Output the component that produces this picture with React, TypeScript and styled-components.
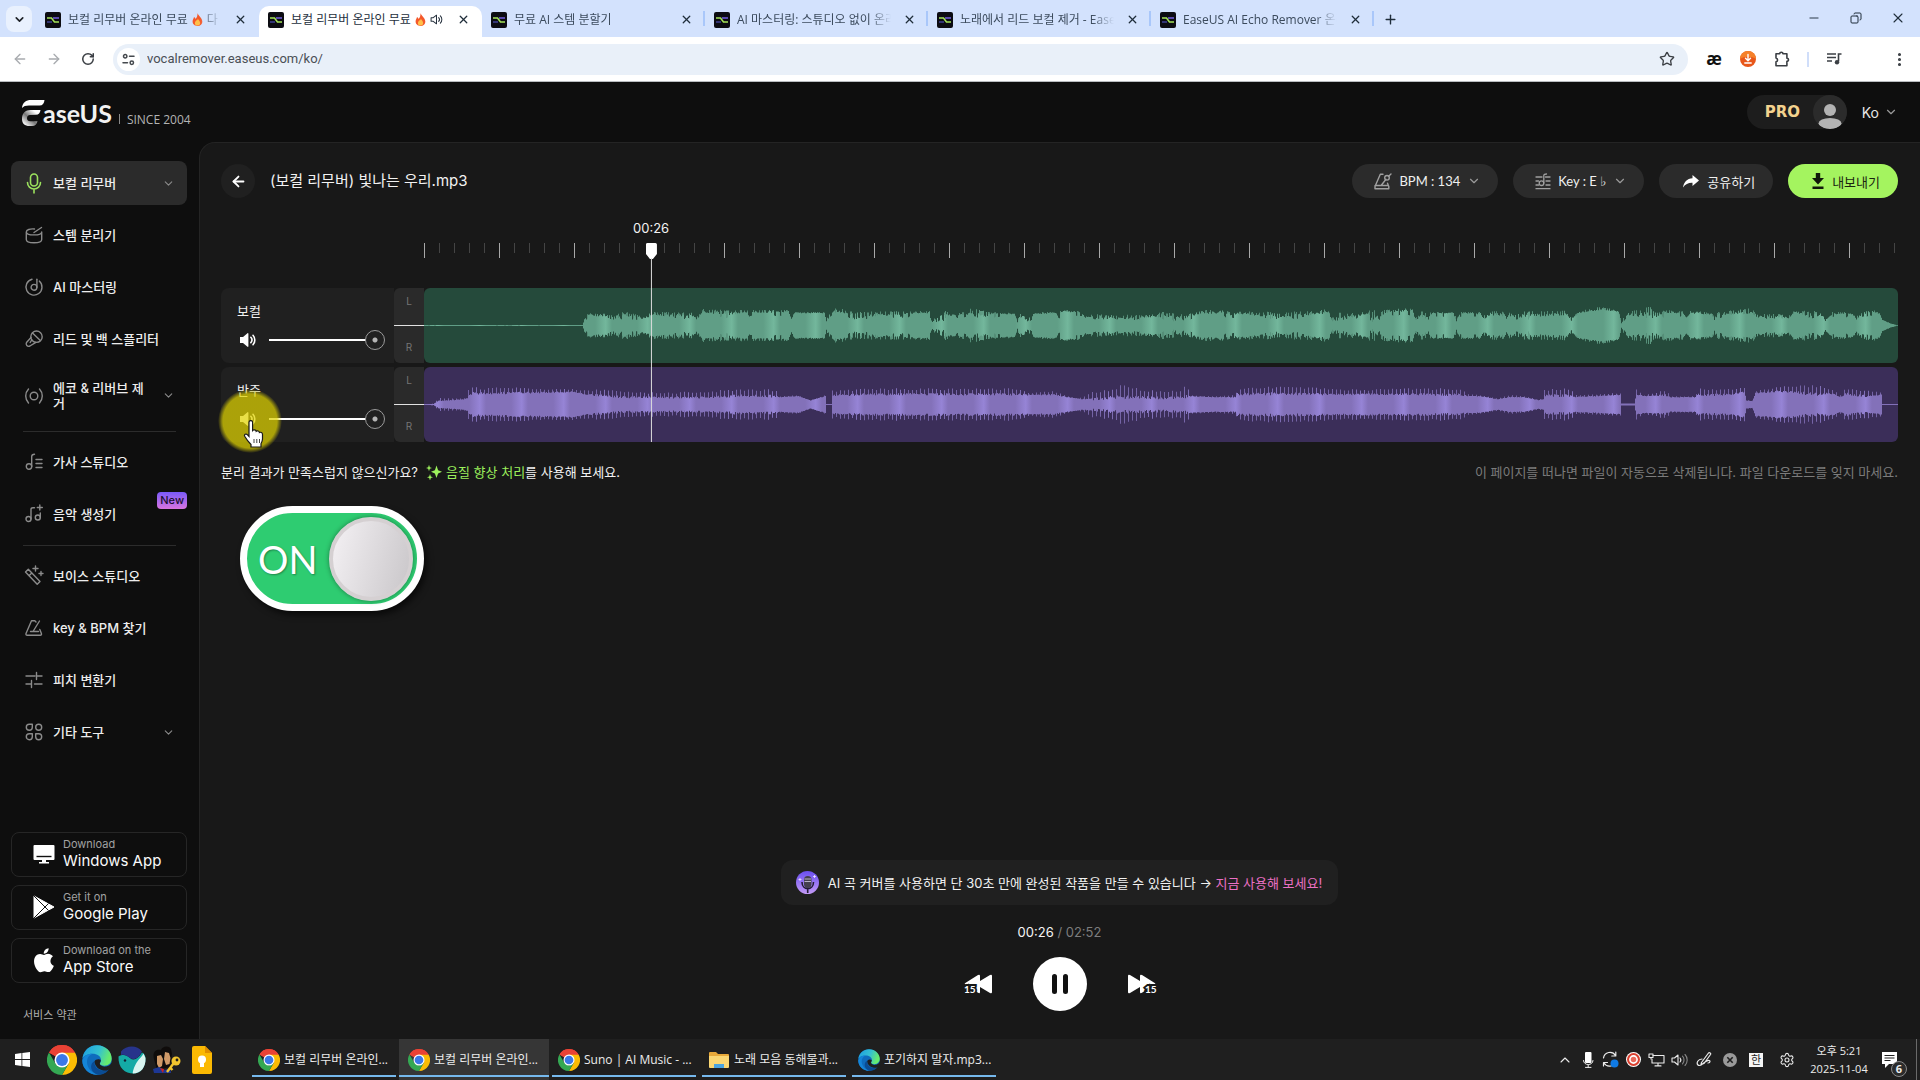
import React, { useId, useState } from "react";
import styled, { createGlobalStyle, css } from "styled-components";
import {
  ArrowLeft,
  ArrowRight,
  ChevronDown,
  ChevronUp,
  Copy,
  EllipsisVertical,
  Minus,
  Plus,
  RotateCw,
  Settings,
  Star,
  X,
} from "lucide-react";

const PAGE_FONT = `"Inter", "Noto Sans CJK KR", sans-serif`;
const SYSTEM_FONT = `"Open Sans", "Noto Sans CJK KR", sans-serif`;

const GlobalStyle = createGlobalStyle`
  *, *::before, *::after { box-sizing: border-box; }
  body { margin: 0; background: #0e0e0e; color: #f2f2f2; font-family: ${PAGE_FONT}; }
  button, input { font: inherit; color: inherit; }
  button { border: 0; padding: 0; background: none; cursor: pointer; }
  a { color: inherit; text-decoration: none; }
  svg { display: block; flex: none; }
`;

const Screen = styled.div`
  display: flex;
  flex-direction: column;
  min-height: 100vh;
`;

/* ---------- browser chrome ---------- */

const TabStrip = styled.div`
  display: flex;
  align-items: flex-start;
  height: 37px;
  padding: 6px 10px 0 6px;
  background: #d3e2fd;
  color: #3b4a5c;
  font: 12px/16px ${SYSTEM_FONT};
`;

const TabSearch = styled.button`
  display: grid;
  place-items: center;
  width: 26px;
  height: 26px;
  margin-right: 4px;
  border-radius: 8px;
  background: #e9f1fe;
  color: #1f2328;
`;

const Tab = styled.div<{ $active?: boolean; $divided?: boolean }>`
  position: relative;
  display: flex;
  align-items: center;
  width: 223px;
  height: 31px;
  padding: 0 11px 4px 9px;
  border-radius: 10px 10px 0 0;
  ${(p) => p.$active && css`background: #fff; color: #25303d;`}
  ${(p) =>
    p.$divided &&
    css`
      &::after {
        content: "";
        position: absolute;
        right: 0;
        top: 5px;
        width: 2px;
        height: 15px;
        background: #a9c7fa;
      }
    `}
`;

const TabTitle = styled.span<{ $whole?: boolean }>`
  display: flex;
  flex: 1;
  align-items: center;
  gap: 4px;
  min-width: 0;
  margin: 0 10px 0 7px;
  overflow: hidden;
  white-space: nowrap;
  ${(p) => !p.$whole && css`mask-image: linear-gradient(90deg, #000 calc(100% - 22px), transparent);`}
`;

const TabClose = styled.button`
  display: grid;
  place-items: center;
  width: 16px;
  height: 16px;
  color: #1f2d3a;
`;

const NewTab = styled.button`
  display: grid;
  place-items: center;
  width: 26px;
  height: 26px;
  margin-left: 3px;
  color: #1f2d3a;
`;

const WindowButtons = styled.div`
  display: flex;
  gap: 26px;
  margin: 4px 4px 0 auto;
  color: #1f2d3a;
`;

const WindowButton = styled.button`
  display: grid;
  place-items: center;
  width: 16px;
  height: 16px;
`;

const AddressRow = styled.div`
  display: flex;
  align-items: center;
  height: 45px;
  padding: 0 12px 0 11px;
  border-bottom: 1px solid #b9bcc0;
  background: #fff;
  color: #44484d;
`;

const NavButton = styled.button<{ $dim?: boolean }>`
  display: grid;
  place-items: center;
  width: 18px;
  height: 18px;
  margin-right: 16px;
  color: ${(p) => (p.$dim ? "#a8abaf" : "#3b3f44")};
`;

const Omnibox = styled.div`
  display: flex;
  flex: 1;
  align-items: center;
  height: 31px;
  padding: 0 12px 0 4px;
  border-radius: 16px;
  background: #e9f0f9;
`;

const SiteInfo = styled.button`
  display: grid;
  place-items: center;
  width: 23px;
  height: 23px;
  border-radius: 50%;
  background: #fff;
`;

const UrlInput = styled.input`
  flex: 1;
  min-width: 0;
  border: 0;
  padding: 0 7px;
  outline: 0;
  background: none;
  color: #4a4f56;
  font: 13px/20px "Roboto", "Noto Sans CJK KR", sans-serif;
`;

const Extensions = styled.div`
  display: flex;
  align-items: center;
  gap: 16px;
  padding-left: 17px;
`;

const ExtensionButton = styled.button`
  display: grid;
  place-items: center;
  width: 18px;
  height: 18px;
  color: #3b3f44;
`;

const MenuButton = styled(ExtensionButton)`
  margin-left: 31px;
`;

const Ligature = styled.span`
  color: #111;
  font: 700 17px/18px "Open Sans", sans-serif;
`;

const ExtensionDivider = styled.span`
  width: 2px;
  height: 15px;
  background: #d0defa;
`;

/* ---------- site header ---------- */

const SiteHeader = styled.header`
  display: flex;
  align-items: center;
  justify-content: space-between;
  height: 60px;
  padding: 0 22px;
`;

const Brand = styled.a`
  display: flex;
  align-items: flex-end;
  height: 30px;
`;

const BrandName = styled.span`
  margin-left: -3px;
  font: 700 25px/28px "Lato", sans-serif;
`;

const BrandSince = styled.span`
  margin-left: 7px;
  color: #b4b4b4;
  font: 12px/15px "Open Sans", sans-serif;
  &::before {
    content: "";
    display: inline-block;
    width: 1px;
    height: 10px;
    margin-right: 7px;
    background: #8a8a8a;
  }
`;

const HeaderActions = styled.div`
  display: flex;
  align-items: center;
  gap: 15px;
`;

const ProPill = styled.button`
  display: flex;
  align-items: center;
  justify-content: space-between;
  width: 100px;
  height: 34px;
  padding-left: 18px;
  border-radius: 17px;
  background: #1d1d1d;
  color: #f3d28e;
  font: 700 15px/18px "DejaVu Sans", sans-serif;
`;

const LanguageButton = styled.button`
  display: flex;
  align-items: center;
  gap: 5px;
  color: #e6e6e6;
  font-size: 14px;
`;

/* ---------- sidebar ---------- */

const Body = styled.div`
  display: flex;
  flex: 1;
`;

const Sidebar = styled.aside`
  display: flex;
  flex-direction: column;
  width: 199px;
  padding: 19px 12px 12px 11px;
`;

const NavGroup = styled.nav`
  display: flex;
  flex-direction: column;
  gap: 8px;
  & + & {
    margin-top: 9px;
    padding-top: 9px;
    position: relative;
  }
  & + &::before {
    content: "";
    position: absolute;
    top: 0;
    left: 12px;
    right: 11px;
    height: 1px;
    background: #2c2c2c;
  }
`;

const NavLink = styled.a<{ $active?: boolean; $tall?: boolean }>`
  position: relative;
  display: flex;
  align-items: center;
  gap: 10px;
  height: ${(p) => (p.$tall ? 53 : 44)}px;
  padding: 0 12px 0 14px;
  border-radius: 8px;
  background: ${(p) => (p.$active ? "#2b2b2b" : "none")};
  color: #ededed;
  font-size: 13px;
  font-weight: 500;
  line-height: 15px;
  & > svg { color: #8b8b8b; }
  & > svg:first-child { color: ${(p) => (p.$active ? "#9be15d" : "#8b8b8b")}; }
`;

const NavLabel = styled.span`
  flex: 1;
`;

const NewBadge = styled.span`
  position: absolute;
  top: 0;
  right: 0;
  padding: 0 3px;
  border-radius: 4px;
  background: linear-gradient(180deg, #7a5af8, #d874e0);
  color: #1c1030;
  font-size: 11px;
  line-height: 17px;
`;

const Downloads = styled.div`
  display: flex;
  flex-direction: column;
  gap: 8px;
  margin-top: auto;
`;

const DownloadLink = styled.a`
  display: grid;
  grid-template-columns: 24px 1fr;
  align-items: center;
  column-gap: 7px;
  height: 45px;
  padding: 0 0 2px 20px;
  border: 1px solid #262626;
  border-radius: 8px;
  & > svg { justify-self: center; }
`;

const DownloadText = styled.span`
  display: flex;
  flex-direction: column;
  color: #fafafa;
  font-size: 15px;
  line-height: 18px;
`;

const DownloadCaption = styled.small`
  color: #a2a2a2;
  font-size: 11px;
  line-height: 15px;
`;

const TermsLink = styled.a`
  margin: 20px 0 0 12px;
  color: #b0b0b0;
  font-size: 11px;
  line-height: 24px;
`;

/* ---------- main panel ---------- */

const Panel = styled.main`
  display: flex;
  flex: 1;
  flex-direction: column;
  min-width: 0;
  padding: 21px 22px 28px 21px;
  border: solid #242424;
  border-width: 1px 0 0 1px;
  border-radius: 16px 0 0 0;
  background: #181818;
`;

const TitleRow = styled.div`
  display: flex;
  align-items: center;
  gap: 15px;
`;

const BackButton = styled.button`
  display: grid;
  place-items: center;
  width: 34px;
  height: 34px;
  border-radius: 50%;
  background: #202020;
  color: #fff;
`;

const TrackTitle = styled.h1`
  flex: 1;
  margin: 0;
  font-size: 15px;
  font-weight: 400;
  line-height: 22px;
`;

const Pill = styled.button<{ $accent?: boolean; $chooser?: boolean }>`
  display: flex;
  align-items: center;
  justify-content: center;
  gap: 8px;
  height: 34px;
  padding: 0 18px 0 24px;
  border-radius: 17px;
  background: ${(p) => (p.$accent ? "#a4f45f" : "#2b2b2b")};
  color: ${(p) => (p.$accent ? "#1a2410" : "#f0f0f0")};
  font-size: 13px;
  white-space: nowrap;
  ${(p) =>
    p.$chooser &&
    css`
      gap: 7px;
      padding: 0 17px 0 22px;
      font: 13px/20px "Lato", "DejaVu Sans", sans-serif;
    `}
`;

const Timeline = styled.section`
  position: relative;
  margin-top: 22px;
`;

const Ruler = styled.div`
  height: 39px;
  margin: 0 0 5px 203px;
  padding-top: 23px;
  &::before {
    content: "";
    display: block;
    height: 15px;
    background:
      repeating-linear-gradient(90deg, #a8a8a8 0 1px, transparent 1px 75px),
      repeating-linear-gradient(90deg, #444 0 1px, transparent 1px 15px) 0 0 / 100% 10px no-repeat;
  }
`;

const Tracks = styled.div`
  display: flex;
  flex-direction: column;
  gap: 4px;
  padding-top: 24px;
`;

const TrackRow = styled.div`
  display: grid;
  grid-template-columns: 173px 30px 1fr;
  height: 75px;
`;

const TrackControls = styled.div`
  position: relative;
  display: flex;
  flex-direction: column;
  gap: 9px;
  padding: 13px 4px 0 16px;
  border-radius: 8px 0 0 8px;
  background: #202020;
  font-size: 13px;
  line-height: 20px;
`;

const VolumeLine = styled.div`
  display: flex;
  align-items: center;
  gap: 10px;
  height: 20px;
`;

const MuteButton = styled.button`
  display: grid;
  place-items: center;
  width: 22px;
  height: 20px;
  color: #fff;
`;

const VolumeSlider = styled.input`
  appearance: none;
  width: 116px;
  height: 20px;
  margin: 0;
  background: linear-gradient(#fff, #fff) 0 50% / 97px 2px no-repeat;
  cursor: pointer;
  &::-webkit-slider-thumb {
    appearance: none;
    width: 20px;
    height: 20px;
    border: 1px solid #9a9a9a;
    border-radius: 50%;
    background: radial-gradient(circle, #b5b5b5 0 2px, #202020 3px);
  }
`;

const Channels = styled.div`
  display: flex;
  flex-direction: column;
  align-items: center;
  justify-content: space-between;
  padding: 6px 0 8px;
  border-radius: 6px 0 0 6px;
  background: linear-gradient(#e2e2e2, #e2e2e2) 0 50% / 100% 1px no-repeat, #2a2a2a;
  color: #757575;
  font-size: 10px;
  line-height: 15px;
`;

const Lane = styled.div<{ $tone: string }>`
  overflow: hidden;
  border-radius: 6px;
  background: ${(p) => p.$tone};
  & > svg { width: 100%; height: 100%; }
`;

const PlayheadArea = styled.div`
  position: absolute;
  inset: 0 0 0 203px;
  pointer-events: none;
`;

const Playhead = styled.div`
  position: absolute;
  top: 0;
  bottom: 0;
  display: flex;
  flex-direction: column;
  align-items: center;
  gap: 7px;
  transform: translateX(-50%);
  font-size: 13px;
  line-height: 16px;
  &::after {
    content: "";
    position: absolute;
    top: 38px;
    bottom: 0;
    width: 1px;
    background: #dcdcdc;
  }
`;

const PointerHalo = styled.div`
  position: absolute;
  top: 22px;
  left: -3px;
  width: 64px;
  height: 64px;
  border-radius: 50%;
  background: radial-gradient(circle, rgba(225, 212, 0, 0.72) 0 27px, rgba(225, 212, 0, 0) 32px);
  pointer-events: none;
  & > svg {
    position: absolute;
    top: 31px;
    left: 25px;
  }
`;

const HintRow = styled.div`
  display: flex;
  justify-content: space-between;
  margin-top: 19px;
  font-size: 13px;
  line-height: 22px;
`;

const Hint = styled.p`
  display: flex;
  align-items: center;
  margin: 0;
`;

const EnhanceLink = styled.a`
  display: flex;
  align-items: center;
  gap: 4px;
  margin-left: 8px;
  color: #9cf05c;
`;

const Notice = styled.p`
  margin: 0;
  color: #7b7b7b;
`;

const Switch = styled.label`
  display: flex;
  align-items: center;
  justify-content: space-between;
  align-self: flex-start;
  width: 184px;
  height: 105px;
  margin: 23px 0 0 19px;
  padding: 0 4px 0 11px;
  border: 7px solid #fff;
  border-radius: 53px;
  background: #2ecc71;
  box-shadow: 3px 4px 6px rgba(0, 0, 0, 0.6);
  color: #fff;
  font: 38px/40px "Lato", sans-serif;
  text-shadow: 1px 1px 2px rgba(0, 0, 0, 0.35);
  cursor: pointer;
`;

const SwitchInput = styled.input`
  appearance: none;
  width: 84px;
  height: 84px;
  margin: 0;
  border: 4px solid #d5d0d2;
  border-radius: 50%;
  background: linear-gradient(105deg, #f4f1f4, #c9c6c9);
  box-shadow: 0 0 5px rgba(0, 0, 0, 0.4);
  cursor: pointer;
`;

const Player = styled.footer`
  display: flex;
  flex-direction: column;
  align-items: center;
  margin-top: auto;
`;

const Promo = styled.p`
  display: flex;
  align-items: center;
  gap: 9px;
  height: 45px;
  margin: 0;
  padding: 0 16px 0 15px;
  border-radius: 12px;
  background: #202020;
  font-size: 13px;
  white-space: nowrap;
`;

const PromoLink = styled.a`
  color: #ea70c4;
`;

const Clock = styled.p`
  margin: 17px 0 15px;
  color: #7d7d7d;
  font-size: 13px;
  line-height: 20px;
`;

const ClockNow = styled.span`
  color: #f5f5f5;
`;

const Transport = styled.div`
  display: flex;
  align-items: center;
  gap: 40px;
`;

const SkipButton = styled.button`
  display: grid;
  place-items: center;
  width: 30px;
  height: 24px;
`;

const PauseButton = styled.button`
  display: grid;
  place-items: center;
  width: 54px;
  height: 54px;
  border-radius: 50%;
  background: #fff;
`;

/* ---------- desktop taskbar ---------- */

const Taskbar = styled.div`
  display: flex;
  height: 41px;
  padding-left: 4px;
  background: #1f1f1f;
  color: #ececec;
  font: 12px/18px ${SYSTEM_FONT};
`;

const Launchers = styled.div`
  display: flex;
  width: 245px;
`;

const Launcher = styled.button`
  display: grid;
  place-items: center;
  width: 35px;
  &:first-child {
    width: 40px;
    padding-right: 4px;
  }
`;

const TaskButton = styled.button<{ $active?: boolean }>`
  position: relative;
  display: flex;
  align-items: center;
  gap: 4px;
  width: 150px;
  padding: 0 4px 0 9px;
  background: ${(p) => (p.$active ? "#363636" : "none")};
  white-space: nowrap;
  &::after {
    content: "";
    position: absolute;
    bottom: 3px;
    left: ${(p) => (p.$active ? 0 : 3)}px;
    right: ${(p) => (p.$active ? 0 : 3)}px;
    height: 2px;
    background: #76b9ed;
  }
`;

const TaskLabel = styled.span`
  overflow: hidden;
  text-overflow: ellipsis;
`;

const Tray = styled.div`
  display: flex;
  align-items: center;
  gap: 4px;
  margin-left: auto;
  padding-right: 3px;
`;

const TrayButton = styled.button<{ $wide?: boolean; $roomy?: boolean }>`
  display: grid;
  place-items: center;
  width: ${(p) => (p.$roomy ? 32 : p.$wide ? 22 : 19)}px;
  height: 24px;
`;

const ImeMark = styled.span`
  width: 14px;
  height: 14px;
  background: #f5f5f5;
  color: #1f1f1f;
  font-size: 11px;
  line-height: 13px;
`;

const TrayClock = styled.time`
  width: 64px;
  font-size: 11px;
  text-align: center;
`;

const Notifications = styled.button`
  position: relative;
  display: grid;
  place-items: center;
  width: 26px;
  height: 28px;
  margin: 0 9px 0 2px;
`;

const NotificationCount = styled.span`
  position: absolute;
  right: -4px;
  bottom: -3px;
  width: 16px;
  height: 16px;
  border: 1px solid #8a8a8a;
  border-radius: 50%;
  background: #2c2c2c;
  font-size: 11px;
  font-weight: 700;
  line-height: 14px;
`;

const DesktopEdge = styled.span`
  align-self: stretch;
  width: 1px;
  background: #6a6a6a;
`;

/* ---------- drawings ---------- */

const stroke = {
  fill: "none",
  stroke: "currentColor",
  strokeWidth: 1.4,
  strokeLinecap: "round",
  strokeLinejoin: "round",
} as const;

const Favicon = () => (
  <svg width="16" height="16" viewBox="0 0 16 16">
    <rect width="16" height="16" rx="2" fill="#0c0c12" />
    <path d="M8 6h6" stroke="#6f5bd6" strokeWidth="1.6" />
    <path d="M2 10h5" stroke="#3d3f8f" strokeWidth="1.6" />
    <path d="M2 6h4.500L9.500 10H14" fill="none" stroke="#a5e35a" strokeWidth="1.6" />
  </svg>
);

const Flame = () => (
  <svg width="11" height="13" viewBox="0 0 11 13">
    <path d="M5.500 0C6 2.500 10 4.500 10.300 8.200 10.500 11 8.300 13 5.500 13S.500 11 .600 8.300C.700 6.500 1.800 5.600 2 4c1 .5 1.500 1.200 1.600 2C5 4.600 5.600 2.500 5.500 0z" fill="#f4582a" />
    <path d="M5.800 5.500c.4 1.600 2.400 2.400 2.400 4.500 0 1.600-1.200 2.600-2.700 2.600S2.900 11.600 2.900 10.200c0-1.400 1-1.800 1.200-2.900 1 .4 1.700-.6 1.700-1.800z" fill="#ffc04a" />
  </svg>
);

const Speaker = ({ size = 18 }: { size?: number }) => (
  <svg width={size} height={size} viewBox="0 0 18 18">
    <path d="M1 6h3l4.500-3.800c.4-.3.900 0 .9.500v12.600c0 .5-.5.800-.9.500L4 12H1z" fill="currentColor" />
    <path d="M11.800 6.300a4 4 0 0 1 0 5.400M14 4.300a7 7 0 0 1 0 9.400" {...stroke} strokeWidth={1.600} />
  </svg>
);

const OutlineSpeaker = () => (
  <svg width="13" height="13" viewBox="0 0 18 18">
    <path d="M1.500 6.500h3L9 3v12l-4.500-3.500h-3zM12 6.300a4 4 0 0 1 0 5.400M14.300 4a7 7 0 0 1 0 10" {...stroke} />
  </svg>
);

const SiteControls = () => (
  <svg width="13" height="13" viewBox="0 0 13 13" {...stroke} strokeWidth={1.500}>
    <circle cx="3.200" cy="3.200" r="1.700" />
    <path d="M7.500 3.200H12M1 9.800h4.500" />
    <circle cx="9.800" cy="9.800" r="1.700" />
  </svg>
);

const DownloadBadge = () => (
  <svg width="16" height="16" viewBox="0 0 16 16">
    <circle cx="8" cy="8" r="8" fill="#e8571a" />
    <path d="M0 8a8 8 0 0 1 16 0c-4-3-12-3-16 0z" fill="#f5812a" />
    <path d="M8 3.500v6M5.500 7.300L8 9.800l2.500-2.500M4.800 12h6.400" {...stroke} stroke="#fff" />
  </svg>
);

const PuzzlePiece = () => (
  <svg width="18" height="18" viewBox="0 0 18 18" {...stroke} strokeWidth={1.600}>
    <path d="M3 3.800h3.700a1.600 1.600 0 0 1 3.200 0h4v4.400a1.600 1.600 0 0 1 0 3.200v4.300H3v-3.800a2 2 0 0 0 0-3.900z" />
  </svg>
);

const PlaylistNote = () => (
  <svg width="16" height="14" viewBox="0 0 16 14">
    <path d="M1 2h9M1 5.500h9M1 9h5" stroke="currentColor" strokeWidth="1.600" />
    <path d="M15.500 2h-3v7.500" fill="none" stroke="currentColor" strokeWidth="1.600" />
    <circle cx="11" cy="10.200" r="2.200" fill="currentColor" />
  </svg>
);

const BrandMark = () => (
  <svg width="24" height="28" viewBox="0 0 24 28">
    <defs>
      <linearGradient id="brand-shade" x1="0" y1="1" x2="1" y2="0">
        <stop offset="0.100" stopColor="#fff" />
        <stop offset="0.450" stopColor="#777" />
        <stop offset="0.800" stopColor="#fff" />
      </linearGradient>
    </defs>
    <path d="M0 9C.5 3.500 4 1 9 1h13.500c-.3 3.500-1.800 5.500-5 5.500H7C3.500 6.500 1.500 7.300 0 9z" fill="#fff" />
    <path d="M0 20c0-6 3.500-9 8.500-9h10c-.4 3-1.800 4.600-4.500 4.800l-6 .3c-2 .2-3 1.500-3 3.200 0 2 1.300 3 3.300 3h7.200c-.7 3.200-2.300 4.700-5.500 4.700H7.500C2.800 27 0 24.500 0 20z" fill="url(#brand-shade)" />
  </svg>
);

const Avatar = () => (
  <svg width="34" height="34" viewBox="0 0 34 34">
    <defs>
      <clipPath id="avatar-clip">
        <circle cx="17" cy="17" r="17" />
      </clipPath>
    </defs>
    <circle cx="17" cy="17" r="17" fill="#2b2b2b" />
    <g clipPath="url(#avatar-clip)" fill="#b3b3b3">
      <circle cx="17" cy="15" r="6" />
      <ellipse cx="17" cy="28.500" rx="11.500" ry="5.500" />
    </g>
  </svg>
);

const icons: Record<string, React.ReactNode> = {
  mic: (
    <g strokeWidth="1.600">
      <rect x="5.500" y="0" width="7" height="12" rx="3.500" />
      <path d="M2.500 8.500a6.500 6.500 0 0 0 13 0M9 15.200V19" />
    </g>
  ),
  drum: (
    <>
      <path d="M9.500 3C5 2.600 1.300 3.800 1.300 5.900s3.300 3 7.700 3 7.700-1.200 7.700-3M1.300 5.900v7.600c0 1.900 3.300 3.300 7.700 3.300s7.700-1.400 7.700-3.300V5.900" />
      <path d="M9 6.500L16.500 1.500" />
    </>
  ),
  disc: (
    <>
      <path d="M7 1.300A8 8 0 1 0 14.300 3.100" />
      <circle cx="9" cy="9.300" r="2.900" />
      <path d="M11.900 9.300V1.200" />
    </>
  ),
  vocal: (
    <>
      <circle cx="11.500" cy="6.700" r="5.700" />
      <path d="M6 7.500L1.500 12.500c-1.200 2.200.9 4.700 3.400 3.500l6-3.700M7.500 3L15.300 10.500M6.800 9.800l-1.600 2.700" />
    </>
  ),
  echo: (
    <>
      <circle cx="9" cy="9" r="3.800" />
      <path d="M3.500 2C-.2 6-.2 12 3.500 16M14.500 2c3.700 4 3.700 10 0 14" />
    </>
  ),
  lyrics: (
    <>
      <circle cx="4" cy="13.500" r="2.700" />
      <path d="M6.700 13.500V3.500C6.700 2 7.500 1.300 9.500 1.300M11 6.500h6M11 10.500h6M11 14.500h6" />
    </>
  ),
  compose: (
    <>
      <circle cx="3.500" cy="14" r="2.500" />
      <circle cx="12.800" cy="12.500" r="2.500" />
      <path d="M6 14V4.200C6 3.200 6.800 2.800 8 2.800h1.500M15.300 12.500V8M14.800 0v5M12.300 2.500h5" />
    </>
  ),
  wand: (
    <>
      <path d="M.5 5l2.800-2.800L15 14.500l-2.800 2.800zM4 8.800L6.800 6" />
      <path d="M10.500-1v5M8 1.500h5M16 4.500v4M14 6.500h4" />
    </>
  ),
  metronome: (
    <path d="M11 3L9.800 1.800H6.500L1 14.500c-.3 1 .2 1.700 1.200 1.700h13c1 0 1.600-.7 1.200-1.700l-1.600-4M8 12.500L14.500 2M5.500 12.500h8" />
  ),
  pitch: <path d="M1 5h9M11.500 1.500v7M11.500 5h5.500M1 13h4.500M6.500 9.500v7M9.500 13H17" />,
  grid: (
    <>
      <path d="M4.300 1.200a3 3 0 1 0 3 3v-3zM4.300 10.700h3v3a3 3 0 1 1-3-3z" />
      <circle cx="13.700" cy="4.200" r="3" />
      <path d="M13.700 10.700h-3v3a3 3 0 1 0 3-3z" />
    </>
  ),
};

const NavIcon = ({ name }: { name: string }) => (
  <svg width="18" height="18" viewBox="0 0 18 18" overflow="visible" {...stroke}>
    {icons[name]}
  </svg>
);

const BpmIcon = () => (
  <svg width="18" height="17" viewBox="0 0 18 17" {...stroke} stroke="#a0a0a0" strokeWidth={1.400}>
    <path d="M9 1.200H6.300L1 13.500v2.300h13.800v-2.300l-1.300-3.300M1 12.500h13.500M7.500 12L12 6.300" />
    <circle cx="13" cy="4.800" r="2.300" />
    <path d="M14.600 3.200L17 1" />
  </svg>
);

const KeyIcon = () => (
  <svg width="16" height="17" viewBox="0 0 16 17" {...stroke} stroke="#a0a0a0" strokeWidth={1.300}>
    <path d="M1 4h6M10.500 4H15M1 8h2.500M11 8h4M1 12h3M11 12h4M1 15.700h14" />
    <circle cx="6.500" cy="10.200" r="2.300" />
    <path d="M8.800 10V2.500C8.800 1.500 9.800 1 11.500 1" />
  </svg>
);

const ShareArrow = () => (
  <svg width="16" height="13" viewBox="0 0 16 13">
    <path d="M9.500 0L16 5.500 9.500 11V7.800C5.500 7.600 2.500 9 0 12.500.6 7.500 4 3.500 9.500 3.300z" fill="#fff" />
  </svg>
);

const DownloadArrow = () => (
  <svg width="12" height="16" viewBox="0 0 12 16">
    <path d="M3.800 0h4.400v5H12l-6 6.500L0 5h3.800zM.500 13.500h11V16H.500z" fill="#10180a" />
  </svg>
);

const Sparkles = () => (
  <svg width="16" height="16" viewBox="0 0 16 16" fill="#9cf05c">
    <path d="M10.500 1.500l1.600 4.700L16 7.800l-3.900 1.600-1.600 4.700-1.600-4.700L5 7.800l3.900-1.600zM3 .8l.8 2.400L6 4l-2.200.8L3 7.200l-.8-2.400L0 4l2.200-.8zM4 10l.8 2.500 2.200.8-2.200.8L4 16.500l-.8-2.400-2.200-.8 2.200-.8z" />
  </svg>
);

const PlayheadHandle = () => (
  <svg width="11" height="17" viewBox="0 0 11 17">
    <path d="M1.500 0h8A1.500 1.500 0 0 1 11 1.500V11l-4 5H4L0 11V1.500A1.500 1.500 0 0 1 1.500 0z" fill="#fff" />
  </svg>
);

const HandPointer = () => (
  <svg width="22" height="28" viewBox="0 0 22 28">
    <path
      d="M6 2.200c0-2.200 3.600-2.200 3.600 0v8.300c.8-1 3.300-.8 3.600.8 1-.8 3-.4 3.200 1.200 1.200-.6 3.100 0 3.100 2v4.500c0 2-.8 3.500-1.500 4.800V27H8v-2.500c-2-2-4.500-5-6.300-8.200-.9-1.700 1.300-3 2.600-1.600L6 16.500z"
      fill="#fff"
      stroke="#1a1a1a"
      strokeWidth="1.200"
    />
    <path d="M11 19v4M13.800 19v4M16.500 19v4" stroke="#444" strokeWidth="1" />
  </svg>
);

const PromoBadge = () => (
  <svg width="23" height="23" viewBox="0 0 23 23">
    <defs>
      <linearGradient id="promo-fill" x1="0" y1="0" x2="0" y2="1">
        <stop offset="0" stopColor="#6a4ff0" />
        <stop offset="1" stopColor="#c39af6" />
      </linearGradient>
    </defs>
    <circle cx="11.500" cy="11.500" r="11.500" fill="url(#promo-fill)" />
    <rect x="8" y="5" width="7.500" height="12" rx="3.700" fill="#45404f" />
    <path d="M8.500 8h6.500M8.500 10.500h6.500" stroke="#b9b3c8" />
    <path d="M6 11c0 9 11.500 9 11.500 0M11.700 18v4" fill="none" stroke="#221c33" strokeWidth="1.600" />
    <path d="M4 7v3M2.500 8.500h3M18.500 4v3M17 5.500h3" stroke="#efe6ff" strokeWidth="0.800" />
  </svg>
);

const SkipIcon = ({ forward }: { forward?: boolean }) => (
  <svg width="30" height="22" viewBox="0 0 30 22">
    <path
      d={
        forward
          ? "M1 3Q1 1 3 2L13 8V3Q13 1 15 2L28.500 10.500 15 19.800Q13 21 13 19V14L3 20Q1 21 1 19z"
          : "M29 3Q29 1 27 2L17 8V3Q17 1 15 2L1.500 10.500 15 19.800Q17 21 17 19V14L27 20Q29 21 29 19z"
      }
      fill="#fff"
    />
    <text
      x={forward ? 18 : 1}
      y="20"
      fontSize="10"
      fontWeight="700"
      fontFamily="Lato, sans-serif"
      fill="#fff"
      stroke="#181818"
      strokeWidth="4"
      paintOrder="stroke"
    >
      15
    </text>
  </svg>
);

const PauseIcon = () => (
  <svg width="20" height="20" viewBox="0 0 20 20">
    <path d="M4.500 2.500v15M15.500 2.500v15" stroke="#111" strokeWidth="5" strokeLinecap="round" />
  </svg>
);

const MonitorIcon = () => (
  <svg width="22" height="20" viewBox="0 0 22 20">
    <path d="M1.500 1h19a1 1 0 0 1 1 1v13a1 1 0 0 1-1 1H13v2h3v1.500H6V18h3v-2H1.500a1 1 0 0 1-1-1V2a1 1 0 0 1 1-1z" fill="#fff" />
    <path d="M3.500 12.500h15" stroke="#111" strokeWidth="1.400" />
  </svg>
);

const PlayStoreIcon = () => (
  <svg width="22" height="24" viewBox="0 0 22 24">
    <path d="M1 1l20 11L1 23z" fill="#fff" stroke="#fff" strokeLinejoin="round" />
    <path d="M1 1l14.500 14.500M1 23L15.500 8.500" stroke="#111" strokeWidth="1" />
  </svg>
);

const AppleIcon = () => (
  <svg width="24" height="26" viewBox="1 1.500 21 23">
    <path d="M17.200 13.800c0-2.700 2.200-4 2.300-4.100-1.300-1.800-3.200-2.100-3.900-2.100-1.700-.2-3.200 1-4.100 1-.8 0-2.100-1-3.500-.9-1.800 0-3.500 1-4.400 2.600-1.900 3.300-.5 8.200 1.400 10.800.9 1.300 2 2.800 3.400 2.700 1.400-.1 1.900-.9 3.500-.9s2.100.9 3.500.8c1.500 0 2.400-1.300 3.300-2.600 1-1.500 1.500-3 1.500-3.100-.1 0-3-1.100-3-4.200zM14.500 6c.7-.9 1.200-2.200 1.100-3.400-1.100 0-2.400.7-3.200 1.600-.7.8-1.300 2.100-1.100 3.300 1.200.1 2.500-.6 3.200-1.500z" fill="#fff" />
  </svg>
);

const WindowsLogo = () => (
  <svg width="15" height="15" viewBox="0 0 15 15" fill="#fff">
    <path d="M0 2l6.500-.9v6H0zM7.300 1L15 0v7.100H7.300zM0 7.900h6.500v6L0 13zM7.300 7.900H15V15l-7.700-1z" />
  </svg>
);

const ChromeLogo = ({ size = 24 }: { size?: number }) => (
  <svg width={size} height={size} viewBox="0 0 48 48">
    <path d="M24 24L3.200 12A24 24 0 0 1 44.800 12z" fill="#e94235" />
    <path d="M24 12h20.800A24 24 0 0 1 24 48l10.400-18z" fill="#fbbc04" />
    <path d="M13.600 30L24 36l10.400-6L24 48A24 24 0 0 1 3.200 12z" fill="#34a853" />
    <path d="M3.200 12A24 24 0 0 1 44.800 12H24L13.600 18z" fill="#e94235" />
    <circle cx="24" cy="24" r="12" fill="#fff" />
    <circle cx="24" cy="24" r="9.500" fill="#3b78e7" />
  </svg>
);

const EdgeLogo = ({ size = 24 }: { size?: number }) => {
  const id = useId();
  return (
    <svg width={size} height={size} viewBox="0 0 48 48">
      <defs>
        <linearGradient id={id} x1="0" y1="0" x2="1" y2="0.300">
          <stop offset="0" stopColor="#1b9de2" />
          <stop offset="0.600" stopColor="#35c1d0" />
          <stop offset="1" stopColor="#66eb6e" />
        </linearGradient>
      </defs>
      <circle cx="24" cy="24" r="23.500" fill="#0f6cbd" />
      <path d="M.8 21C3 8 12.500.5 24 .5 38 .5 47.500 11 47.500 21.500c0 7-5 11.500-11.500 11.500-5 0-7.500-1.600-7.500-3 0-1 2-2.200 2-6C30.500 18 24 14 17 14 8 14 2.500 18 .8 21z" fill={`url(#${id})`} />
      <path d="M17 14c-8 3-10 10-8.500 17C10.500 40 19 47 28 47 16 50 .5 40 .5 25 2.500 18 8 14 17 14z" fill="#1585d8" />
      <path d="M20 26c-1 8 5 14.500 13 14.500 5 0 8-1.500 11-3-4 7-11 10-18 10-8-2-13-9-11-16 1-3 3-5 5-5.500z" fill="#0a4c94" />
      <path d="M28.500 30c0 2 4 5.500 10 4.500 4-.7 7.500-3 8.500-6l1 1-2.500 9c-3 2-8 3-12.500 2-8-1.500-12.500-7.500-13-14 1-4 8-5 10-2 0 2-1.500 3.500-1.500 5.500z" fill="#1f1f1f" />
    </svg>
  );
};

const WhaleLogo = () => (
  <svg width="28" height="28" viewBox="0 0 28 28">
    <path d="M27.500 13c0 8.500-5 14.500-12 14.500C7 27.500 0 22 .5 10.500 5 8 8.500 9 12 12c4 3.500 8 .500 12-5.500 2.500 1 3.500 3.500 3.500 6.500z" fill="#14aaa6" />
    <path d="M27.500 12c.5 9-4.500 15.500-12.500 15.500-1 0 1-7 4-11.500 2-3 5-5.500 6.500-8.500z" fill="#d9f4f1" />
    <path d="M3 5.500C8-.5 19-1.500 24 5.500c-3 6-8 9.500-12 6.500C9 9.500 6 8 3 9z" fill="#27348b" />
    <circle cx="7" cy="14.500" r="1.200" fill="#123" />
  </svg>
);

const PortraitKey = () => (
  <svg width="28" height="28" viewBox="0 0 28 28">
    <path d="M1 13C-1 6 3 3 8 4c1-4 8-5 10-1l1 5-2 13-13 3z" fill="#0f0c0b" />
    <path d="M4 10l4-1 2 4-1 7-3 2-2-4zM12 6l4 1 1.500 5-1 6-3.500 1-2-6z" fill="#d09a68" />
    <path d="M0 23l6-2 6 3 5-2 1 5H1z" fill="#1d3794" />
    <path d="M7 22l4 1-1 4z" fill="#c22" />
    <circle cx="23" cy="15" r="4.500" fill="#f2c52e" />
    <circle cx="24" cy="14" r="1.400" fill="#1f1f1f" />
    <path d="M20.500 17.500L14 26M17 21.500l2.500 2.500" stroke="#f2c52e" strokeWidth="2.400" />
  </svg>
);

const KeepLogo = () => (
  <svg width="20" height="28" viewBox="0 0 20 28">
    <path d="M2 0h11l7 7v19a2 2 0 0 1-2 2H2a2 2 0 0 1-2-2V2a2 2 0 0 1 2-2z" fill="#fbb903" />
    <path d="M13 0l7 7h-7z" fill="#e08e00" />
    <circle cx="10" cy="13.500" r="4" fill="#fff" />
    <path d="M8 16h4v5H8z" fill="#fff" />
  </svg>
);

const FolderIcon = () => (
  <svg width="22" height="18" viewBox="0 0 22 18">
    <path d="M1 2a1 1 0 0 1 1-1h6l2 2h10a1 1 0 0 1 1 1v12H1z" fill="#e8a93a" />
    <path d="M1 5h20v11a1 1 0 0 1-1 1H2a1 1 0 0 1-1-1z" fill="#fbd773" />
    <path d="M6 13h10v4H6z" fill="#4aa3df" />
  </svg>
);

const TrayMic = () => (
  <svg width="12" height="16" viewBox="0 0 12 16">
    <rect x="3" y="0" width="6.500" height="11" rx="1" fill="#fff" />
    <path d="M1.500 8.500c0 5.500 9.500 5.500 9.500 0M6.200 13v2.500M3.500 15.400h5.500" {...stroke} strokeWidth={1} />
  </svg>
);

const SyncIcon = () => (
  <svg width="17" height="17" viewBox="0 0 17 17">
    <path d="M1.500 7a6.500 6.500 0 0 1 12-2.500M13.800 1v4h-4M14 9.500a6.500 6.500 0 0 1-12 2.500M1.500 15v-3.500h4" {...stroke} strokeWidth={1.200} />
    <circle cx="12.500" cy="12.500" r="4" fill="#0f7ae5" />
  </svg>
);

const RecordIcon = () => (
  <svg width="15" height="15" viewBox="0 0 15 15">
    <circle cx="7.500" cy="7.500" r="7.500" fill="#fff" />
    <circle cx="7.500" cy="7.500" r="6.500" fill="#d9402f" />
    <circle cx="7.500" cy="7.500" r="3.600" fill="#e9695a" stroke="#fff" strokeWidth="1.600" />
  </svg>
);

const NetworkIcon = () => (
  <svg width="17" height="14" viewBox="0 0 17 14" {...stroke} strokeWidth={1.100}>
    <path d="M5 2.500h11v7.500H4V6M10 10v2.800M7 12.900h6" />
    <path d="M1 1h4v3.500H1zM3 4.500V6" />
  </svg>
);

const TrayVolume = () => (
  <svg width="17" height="14" viewBox="0 0 17 14" {...stroke} strokeWidth={1.100}>
    <path d="M1 5h2.500L7 2v10L3.500 9H1zM9 5a3 3 0 0 1 0 4" />
    <path d="M11.500 3.200a5.500 5.500 0 0 1 0 7.600M14 1.500a8 8 0 0 1 0 11" opacity="0.500" />
  </svg>
);

const PenIcon = () => (
  <svg width="17" height="17" viewBox="0 0 17 17" {...stroke} strokeWidth={1.200}>
    <path d="M5.500 11.500L12.500 2c1-1 2.800.3 2 1.500L8 12.500l-3 1zM6 8C2 8 0 12 2 14s4-1 7-3 5-2 5-.5-2 1.500-2 1.500" />
  </svg>
);

const DismissIcon = () => (
  <svg width="14" height="14" viewBox="0 0 14 14">
    <circle cx="7" cy="7" r="7" fill="#9a9a9a" />
    <path d="M4.300 4.300l5.400 5.400M9.700 4.300L4.300 9.700" stroke="#1f1f1f" strokeWidth="1.600" />
  </svg>
);

const MessageIcon = () => (
  <svg width="18" height="18" viewBox="0 0 18 18">
    <path d="M1 1h15v12H8l-4 4v-4H1z" fill="#fff" />
    <path d="M3.500 4.500h10M3.500 7h10M3.500 9.500h6" stroke="#1f1f1f" />
  </svg>
);

/* ---------- waveforms ---------- */

// [position, body half-height, peak half-height] on a 1474 x 74 canvas
type Point = [number, number, number];

const VOCALS: Point[] = [
  [0, 0.5, 0.5], [158, 0.5, 0.5], [160, 5, 8], [164, 10, 12], [182, 8, 11], [186, 5, 10], [200, 9, 13],
  [220, 6, 9], [226, 9, 13], [268, 9, 12], [272, 6, 8], [279, 12, 16], [308, 10, 14], [318, 12, 15],
  [364, 13, 15], [367, 6, 7], [370, 12, 13], [400, 12, 13], [402, 4, 5], [405, 12, 17], [412, 12, 17],
  [424, 11, 14], [430, 6, 12], [450, 9, 13], [505, 12, 14], [508, 2, 5], [518, 5, 15], [524, 9, 12],
  [542, 11, 13], [546, 7, 16], [562, 8, 13], [566, 11, 13], [590, 11, 12], [593, 3, 5], [597, 11, 14],
  [601, 4, 7], [607, 4, 12], [610, 11, 13], [631, 12, 13], [634, 8, 12], [637, 13, 15], [657, 13, 14],
  [660, 7, 11], [684, 6, 10], [698, 6, 10], [725, 8, 10], [740, 8, 13], [748, 5, 11], [768, 8, 12],
  [772, 11, 14], [796, 12, 16], [806, 10, 13], [820, 11, 14], [835, 8, 12], [850, 6, 13], [856, 6, 11],
  [870, 9, 13], [894, 10, 14], [904, 13, 16], [907, 4, 7], [917, 4, 13], [921, 7, 11], [943, 10, 13],
  [945, 5, 14], [956, 5, 13], [960, 12, 15], [988, 14, 17], [991, 5, 7], [997, 8, 13], [1003, 4, 11],
  [1008, 12, 13], [1030, 12, 13], [1032, 4, 6], [1036, 12, 13], [1056, 11, 13], [1060, 5, 10],
  [1066, 10, 14], [1100, 7, 13], [1104, 8, 13], [1140, 10, 14], [1147, 6, 7], [1155, 12, 14],
  [1175, 15, 18], [1194, 13, 15], [1197, 2, 4], [1204, 10, 14], [1212, 8, 14], [1226, 6, 17],
  [1232, 8, 12], [1242, 12, 15], [1258, 12, 14], [1262, 7, 8], [1266, 12, 14], [1287, 10, 13],
  [1290, 5, 8], [1294, 10, 13], [1325, 11, 16], [1336, 7, 11], [1350, 6, 11], [1366, 7, 10],
  [1370, 12, 15], [1384, 9, 14], [1398, 8, 14], [1401, 4, 6], [1408, 11, 13], [1428, 11, 13],
  [1432, 6, 9], [1438, 11, 13], [1448, 13, 15], [1455, 11, 13], [1458, 5, 6], [1466, 2, 2], [1472, 0.5, 0.5],
  [1474, 0.5, 0.5],
];

const BACKING: Point[] = [
  [0, 0.5, 0.5], [9, 0.5, 1], [15, 3, 6], [40, 5, 6], [43, 6, 9], [45, 9, 18], [60, 10, 15], [80, 10, 17],
  [110, 11, 15], [148, 12, 15], [162, 9, 13], [172, 8, 14], [200, 6, 12], [240, 6, 11], [280, 6, 12],
  [310, 7, 14], [352, 7, 14], [354, 7, 8], [374, 8, 9], [386, 4, 4], [401, 8, 9], [402, 0.5, 0.5],
  [407, 0.5, 0.5], [408, 8, 13], [450, 9, 15], [500, 9, 15], [596, 9, 15], [603, 9, 11], [629, 9, 13],
  [643, 7, 8], [653, 6, 6], [658, 5, 7], [670, 4, 12], [683, 5, 14], [696, 5, 17], [729, 5, 13],
  [750, 5, 12], [763, 6, 17], [766, 8, 9], [789, 7, 8], [811, 7, 9], [813, 9, 15], [853, 9, 17],
  [929, 9, 14], [993, 9, 15], [1039, 8, 15], [1042, 8, 10], [1056, 8, 9], [1073, 5, 6], [1086, 7, 9],
  [1099, 7, 8], [1114, 4, 5], [1119, 5, 6], [1120, 8, 14], [1147, 7, 15], [1150, 7, 9], [1196, 9, 11],
  [1197, 1, 1], [1210, 1, 1], [1212, 9, 14], [1220, 8, 9], [1242, 8, 14], [1246, 7, 8], [1271, 7, 8],
  [1274, 8, 15], [1293, 8, 15], [1313, 10, 15], [1320, 12, 16], [1322, 4, 4], [1328, 3, 4],
  [1331, 11, 13], [1356, 12, 17], [1373, 10, 18], [1393, 8, 18], [1408, 10, 14], [1416, 7, 9],
  [1422, 9, 16], [1443, 7, 13], [1457, 9, 12], [1458, 0.5, 0.5], [1474, 0.5, 0.5],
];

const noise = (n: number) => {
  const v = Math.sin(n * 127.1 + 11.7) * 43758.5453;
  return v - Math.floor(v);
};

function wavePaths(points: Point[], beat: number) {
  let body = "";
  let peaks = "";
  let seg = 0;
  for (let x = 0; x < 1474; x++) {
    while (seg < points.length - 2 && points[seg + 1][0] <= x) seg++;
    const [x0, b0, p0] = points[seg];
    const [x1, b1, p1] = points[seg + 1];
    const t = (x - x0) / (x1 - x0);
    const b = b0 + (b1 - b0) * t;
    const p = p0 + (p1 - p0) * t;
    const dip = !beat && noise(Math.floor(x / 2) + 300) < 0.12 ? 0.72 : 1;
    const h = (b + (p - b) * noise(x) * (beat ? 0.4 : 0.7)) * dip;
    body += `M${x} ${(37 - h).toFixed(1)}h1v${(h * 2).toFixed(1)}h-1z`;
    const spike = beat ? x % beat === 0 : noise(x + 900) > 0.7;
    if (spike && p > 1) {
      const s = b + (p - b) * (0.85 + noise(x + 50) * 0.35);
      peaks += `M${x} ${(37 - s).toFixed(1)}h1v${(s * 2).toFixed(1)}h-1z`;
    }
  }
  return { body, peaks };
}

const vocalPaths = wavePaths(VOCALS, 0);
const backingPaths = wavePaths(BACKING, 4);

const Waveform = ({ id, paths, dim, bright }: { id: string; paths: { body: string; peaks: string }; dim: string; bright: string }) => (
  <svg viewBox="0 0 1474 74" preserveAspectRatio="none" aria-hidden="true">
    <defs>
      <linearGradient id={id} gradientUnits="userSpaceOnUse" x1="20" x2="62" y1="0" y2="0" spreadMethod="repeat">
        <stop offset="0" stopColor={dim} />
        <stop offset="0.600" stopColor={dim} />
        <stop offset="0.850" stopColor={bright} />
        <stop offset="1" stopColor={dim} />
      </linearGradient>
    </defs>
    <path d={paths.peaks} fill={`url(#${id})`} opacity="0.800" />
    <path d={paths.body} fill={`url(#${id})`} />
  </svg>
);

/* ---------- content ---------- */

const TABS: { title: string; flame?: boolean; tail?: string; active?: boolean; divided?: boolean }[] = [
  { title: "보컬 리무버 온라인 무료", flame: true, tail: "다" },
  { title: "보컬 리무버 온라인 무료", flame: true, active: true },
  { title: "무료 AI 스템 분할기", divided: true },
  { title: "AI 마스터링: 스튜디오 없이 온라", divided: true },
  { title: "노래에서 리드 보컬 제거 - EaseUS", divided: true },
  { title: "EaseUS AI Echo Remover 온라", divided: true },
];

const NAV = [
  [
    { icon: "mic", label: "보컬 리무버", active: true, more: true },
    { icon: "drum", label: "스템 분리기" },
    { icon: "disc", label: "AI 마스터링" },
    { icon: "vocal", label: "리드 및 백 스플리터" },
    { icon: "echo", label: "에코 & 리버브 제거", more: true, tall: true },
  ],
  [
    { icon: "lyrics", label: "가사 스튜디오" },
    { icon: "compose", label: "음악 생성기", badge: "New" },
  ],
  [
    { icon: "wand", label: "보이스 스튜디오" },
    { icon: "metronome", label: "key & BPM 찾기" },
    { icon: "pitch", label: "피치 변환기" },
    { icon: "grid", label: "기타 도구", more: true },
  ],
] as { icon: string; label: string; active?: boolean; more?: boolean; tall?: boolean; badge?: string }[][];

const DOWNLOADS = [
  { caption: "Download", name: "Windows App", icon: <MonitorIcon /> },
  { caption: "Get it on", name: "Google Play", icon: <PlayStoreIcon /> },
  { caption: "Download on the", name: "App Store", icon: <AppleIcon /> },
];

const TASKS = [
  { label: "보컬 리무버 온라인...", icon: <ChromeLogo size={22} /> },
  { label: "보컬 리무버 온라인...", icon: <ChromeLogo size={22} />, active: true },
  { label: "Suno | AI Music - ...", icon: <ChromeLogo size={22} /> },
  { label: "노래 모음 동해물과...", icon: <FolderIcon /> },
  { label: "포기하지 말자.mp3...", icon: <EdgeLogo size={22} /> },
];

const Track = ({ name, tone, children, wave }: { name: string; tone: string; wave: React.ReactNode; children?: React.ReactNode }) => {
  const [volume, setVolume] = useState(100);
  return (
    <TrackRow>
      <TrackControls>
        <span>{name}</span>
        <VolumeLine>
          <MuteButton aria-label={`${name} 음소거`}>
            <Speaker />
          </MuteButton>
          <VolumeSlider
            type="range"
            aria-label={`${name} 볼륨`}
            value={volume}
            onChange={(e) => setVolume(Number(e.target.value))}
          />
        </VolumeLine>
        {children}
      </TrackControls>
      <Channels>
        <span>L</span>
        <span>R</span>
      </Channels>
      <Lane $tone={tone}>{wave}</Lane>
    </TrackRow>
  );
};

export default function App() {
  const [enhanced, setEnhanced] = useState(true);
  const [url, setUrl] = useState("vocalremover.easeus.com/ko/");
  return (
    <Screen>
      <GlobalStyle />
      <TabStrip>
        <TabSearch aria-label="탭 검색">
          <ChevronDown size={13} strokeWidth={3} />
        </TabSearch>
        {TABS.map((tab, i) => (
          <Tab key={i} $active={tab.active} $divided={tab.divided}>
            <Favicon />
            <TabTitle $whole={tab.active}>
              {tab.title}
              {tab.flame && <Flame />}
              {tab.tail}
              {tab.active && <OutlineSpeaker />}
            </TabTitle>
            <TabClose aria-label="탭 닫기">
              <X size={13} strokeWidth={2.4} />
            </TabClose>
          </Tab>
        ))}
        <NewTab aria-label="새 탭">
          <Plus size={15} strokeWidth={2.2} />
        </NewTab>
        <WindowButtons>
          <WindowButton aria-label="최소화"><Minus size={14} strokeWidth={1.6} /></WindowButton>
          <WindowButton aria-label="이전 크기로"><Copy size={12} strokeWidth={2} transform="scale(-1 1)" /></WindowButton>
          <WindowButton aria-label="닫기"><X size={16} strokeWidth={1.6} /></WindowButton>
        </WindowButtons>
      </TabStrip>

      <AddressRow>
        <NavButton $dim aria-label="뒤로"><ArrowLeft size={16} /></NavButton>
        <NavButton $dim aria-label="앞으로"><ArrowRight size={16} /></NavButton>
        <NavButton aria-label="새로고침"><RotateCw size={14} strokeWidth={2.6} /></NavButton>
        <Omnibox>
          <SiteInfo aria-label="사이트 정보"><SiteControls /></SiteInfo>
          <UrlInput aria-label="주소" value={url} onChange={(e) => setUrl(e.target.value)} />
          <ExtensionButton aria-label="북마크"><Star size={16} /></ExtensionButton>
        </Omnibox>
        <Extensions>
          <ExtensionButton><Ligature>æ</Ligature></ExtensionButton>
          <ExtensionButton aria-label="다운로드"><DownloadBadge /></ExtensionButton>
          <ExtensionButton aria-label="확장 프로그램"><PuzzlePiece /></ExtensionButton>
          <ExtensionDivider />
          <ExtensionButton aria-label="미디어"><PlaylistNote /></ExtensionButton>
          <MenuButton aria-label="메뉴"><EllipsisVertical size={17} strokeWidth={2.4} /></MenuButton>
        </Extensions>
      </AddressRow>

      <SiteHeader>
        <Brand href="#" aria-label="EaseUS">
          <BrandMark />
          <BrandName>aseUS</BrandName>
          <BrandSince>SINCE 2004</BrandSince>
        </Brand>
        <HeaderActions>
          <ProPill>
            PRO
            <Avatar />
          </ProPill>
          <LanguageButton>
            Ko
            <ChevronDown size={14} color="#9a9a9a" />
          </LanguageButton>
        </HeaderActions>
      </SiteHeader>

      <Body>
        <Sidebar>
          {NAV.map((group, g) => (
            <NavGroup key={g}>
              {group.map((item) => (
                <NavLink href="#" key={item.label} $active={item.active} $tall={item.tall}>
                  <NavIcon name={item.icon} />
                  <NavLabel>{item.label}</NavLabel>
                  {item.more && <ChevronDown size={13} />}
                  {item.badge && <NewBadge>{item.badge}</NewBadge>}
                </NavLink>
              ))}
            </NavGroup>
          ))}
          <Downloads>
            {DOWNLOADS.map((d) => (
              <DownloadLink href="#" key={d.name}>
                {d.icon}
                <DownloadText>
                  <DownloadCaption>{d.caption}</DownloadCaption>
                  {d.name}
                </DownloadText>
              </DownloadLink>
            ))}
          </Downloads>
          <TermsLink href="#">서비스 약관</TermsLink>
        </Sidebar>

        <Panel>
          <TitleRow>
            <BackButton aria-label="뒤로"><ArrowLeft size={17} strokeWidth={2.6} /></BackButton>
            <TrackTitle>(보컬 리무버) 빛나는 우리.mp3</TrackTitle>
            <Pill $chooser>
              <BpmIcon />
              BPM : 134
              <ChevronDown size={14} color="#9a9a9a" />
            </Pill>
            <Pill $chooser>
              <KeyIcon />
              Key : E ♭
              <ChevronDown size={14} color="#9a9a9a" />
            </Pill>
            <Pill>
              <ShareArrow />
              공유하기
            </Pill>
            <Pill $accent>
              <DownloadArrow />
              내보내기
            </Pill>
          </TitleRow>

          <Timeline>
            <Ruler />
            <Tracks>
              <Track
                name="보컬"
                tone="#254a3b"
                wave={<Waveform id="wave-vocal" paths={vocalPaths} dim="#609e86" bright="#73b79c" />}
              />
              <Track
                name="반주"
                tone="#3b2e59"
                wave={<Waveform id="wave-backing" paths={backingPaths} dim="#8371b9" bright="#9684d6" />}
              >
                <PointerHalo>
                  <HandPointer />
                </PointerHalo>
              </Track>
            </Tracks>
            <PlayheadArea>
              <Playhead style={{ left: `${(26.5 / 172) * 100}%` }}>
                00:26
                <PlayheadHandle />
              </Playhead>
            </PlayheadArea>
          </Timeline>

          <HintRow>
            <Hint>
              분리 결과가 만족스럽지 않으신가요?
              <EnhanceLink href="#">
                <Sparkles />
                음질 향상 처리
              </EnhanceLink>
              를 사용해 보세요.
            </Hint>
            <Notice>이 페이지를 떠나면 파일이 자동으로 삭제됩니다. 파일 다운로드를 잊지 마세요.</Notice>
          </HintRow>

          <Switch>
            ON
            <SwitchInput type="checkbox" checked={enhanced} onChange={(e) => setEnhanced(e.target.checked)} />
          </Switch>

          <Player>
            <Promo>
              <PromoBadge />
              <span>
                AI 곡 커버를 사용하면 단 30초 만에 완성된 작품을 만들 수 있습니다 →{" "}
                <PromoLink href="#">지금 사용해 보세요!</PromoLink>
              </span>
            </Promo>
            <Clock>
              <ClockNow>00:26</ClockNow> / 02:52
            </Clock>
            <Transport>
              <SkipButton aria-label="15초 뒤로"><SkipIcon /></SkipButton>
              <PauseButton aria-label="일시정지"><PauseIcon /></PauseButton>
              <SkipButton aria-label="15초 앞으로"><SkipIcon forward /></SkipButton>
            </Transport>
          </Player>
        </Panel>
      </Body>

      <Taskbar>
        <Launchers>
          <Launcher aria-label="시작"><WindowsLogo /></Launcher>
          <Launcher aria-label="Chrome"><ChromeLogo size={30} /></Launcher>
          <Launcher aria-label="Edge"><EdgeLogo size={30} /></Launcher>
          <Launcher aria-label="Whale"><WhaleLogo /></Launcher>
          <Launcher aria-label="키"><PortraitKey /></Launcher>
          <Launcher aria-label="Keep"><KeepLogo /></Launcher>
        </Launchers>
        {TASKS.map((task, i) => (
          <TaskButton key={i} $active={task.active}>
            {task.icon}
            <TaskLabel>{task.label}</TaskLabel>
          </TaskButton>
        ))}
        <Tray>
          <TrayButton aria-label="숨겨진 아이콘"><ChevronUp size={16} strokeWidth={1.6} /></TrayButton>
          <TrayButton aria-label="마이크"><TrayMic /></TrayButton>
          <TrayButton aria-label="동기화"><SyncIcon /></TrayButton>
          <TrayButton aria-label="녹화"><RecordIcon /></TrayButton>
          <TrayButton aria-label="네트워크"><NetworkIcon /></TrayButton>
          <TrayButton aria-label="음량"><TrayVolume /></TrayButton>
          <TrayButton $wide aria-label="펜"><PenIcon /></TrayButton>
          <TrayButton $wide aria-label="상태"><DismissIcon /></TrayButton>
          <TrayButton $wide><ImeMark>한</ImeMark></TrayButton>
          <TrayButton $roomy aria-label="설정"><Settings size={16} strokeWidth={1.6} /></TrayButton>
          <TrayClock dateTime="2025-11-04T17:21">
            오후 5:21
            <br />
            2025-11-04
          </TrayClock>
          <Notifications aria-label="알림">
            <MessageIcon />
            <NotificationCount>6</NotificationCount>
          </Notifications>
          <DesktopEdge />
        </Tray>
      </Taskbar>
    </Screen>
  );
}
